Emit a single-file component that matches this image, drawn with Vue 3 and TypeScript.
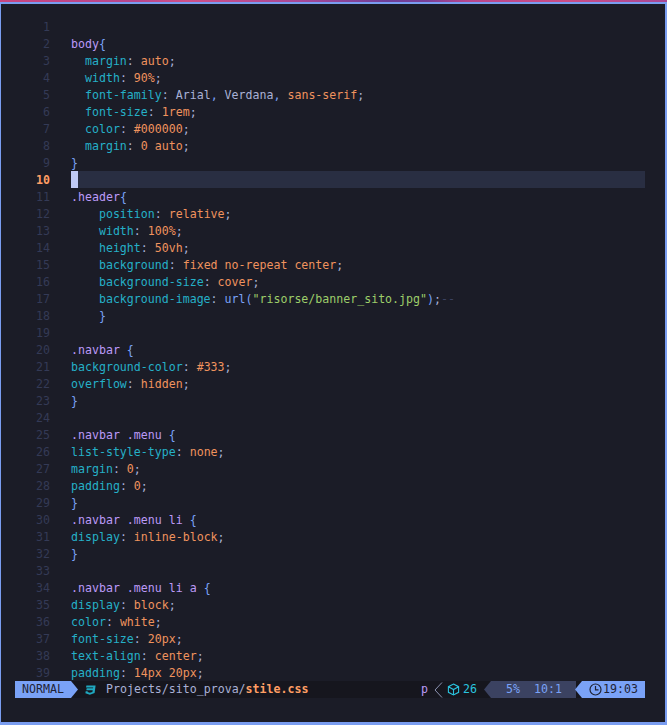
<script setup lang="ts">
type Seg = { t: string; c: string }
const k = 'kw', v = 'val', p = 'pun', f = 'fg', s = 'sel', b = 'blu', g = 'str'
const d = (prop: string, val: string, ind = ''): Seg[] => [
  { t: ind + prop, c: k }, { t: ': ', c: p }, { t: val, c: v }, { t: ';', c: p },
]
const lines: Seg[][] = [
  [],
  [{ t: 'body', c: s }, { t: '{', c: b }],
  d('margin', 'auto', '  '),
  d('width', '90%', '  '),
  [{ t: '  font-family', c: k }, { t: ': ', c: p }, { t: 'Arial', c: f }, { t: ', ', c: b }, { t: 'Verdana', c: f }, { t: ', ', c: b }, { t: 'sans-serif', c: v }, { t: ';', c: p }],
  d('font-size', '1rem', '  '),
  d('color', '#000000', '  '),
  d('margin', '0 auto', '  '),
  [{ t: '}', c: b }],
  [],
  [{ t: '.header', c: s }, { t: '{', c: b }],
  d('position', 'relative', '    '),
  d('width', '100%', '    '),
  d('height', '50vh', '    '),
  d('background', 'fixed no-repeat center', '    '),
  d('background-size', 'cover', '    '),
  [{ t: '    background-image', c: k }, { t: ': ', c: p }, { t: 'url(', c: b }, { t: '"risorse/banner_sito.jpg"', c: g }, { t: ')', c: b }, { t: ';', c: p }, { t: '--', c: 'dim' }],
  [{ t: '    }', c: b }],
  [],
  [{ t: '.navbar ', c: s }, { t: '{', c: b }],
  d('background-color', '#333'),
  d('overflow', 'hidden'),
  [{ t: '}', c: b }],
  [],
  [{ t: '.navbar .menu ', c: s }, { t: '{', c: b }],
  d('list-style-type', 'none'),
  d('margin', '0'),
  d('padding', '0'),
  [{ t: '}', c: b }],
  [{ t: '.navbar .menu li ', c: s }, { t: '{', c: b }],
  d('display', 'inline-block'),
  [{ t: '}', c: b }],
  [],
  [{ t: '.navbar .menu li a ', c: s }, { t: '{', c: b }],
  d('display', 'block'),
  d('color', 'white'),
  d('font-size', '20px'),
  d('text-align', 'center'),
  d('padding', '14px 20px'),
]
</script>

<template>
  <div class="desk">
    <div class="term">
      <div class="editor">
        <div v-for="(line, i) in lines" :key="i" class="row" :class="{ current: i === 9 }">
          <span class="num">{{ i + 1 }}</span>
          <span class="code"><span v-if="i === 9" class="cursor"></span><span v-for="(seg, j) in line" :key="j" :class="seg.c">{{ seg.t }}</span></span>
        </div>
      </div>
      <div class="status">
        <div class="mode">NORMAL</div>
        <svg class="css" width="11" height="10" viewBox="0 0 11 10"><path d="M1.4 0.5H10.6L9.6 8L4.8 9.8L0.4 8.2L.7 6.3H2.8L2.6 7.1L4.8 7.7L7.4 7L7.7 5.2H1.3L1.7 3.2H8L8.2 2.5H1Z" fill="#1fa8c0"/></svg>
        <span class="path">Projects/sito_prova/<b>stile.css</b></span>
        <span class="spacer"></span>
        <span class="plug">p</span>
        <svg class="sep" width="9" height="16" viewBox="0 0 9 16"><path d="M8 .5L1 8L8 15.5" fill="none" stroke="#a9b1d6" stroke-width=".8"/></svg>
        <svg class="cube" width="13" height="13" viewBox="0 0 13 13"><path d="M6.5 1L11.6 3.7V9.3L6.5 12L1.4 9.3V3.7ZM1.4 3.7L6.5 6.5L11.6 3.7M6.5 6.5V12" fill="none" stroke="#2ac3de" stroke-width="1.1"/></svg>
        <span class="count">26</span>
        <div class="pos"><span>5%</span><span>10:1</span></div>
        <div class="clock">
          <svg width="13" height="13" viewBox="0 0 13 13"><circle cx="6.5" cy="6.5" r="5.5" fill="none" stroke="#1f2335" stroke-width="1.2"/><path d="M6.5 3V6.8H9.5" fill="none" stroke="#1f2335" stroke-width="1.2"/></svg>
          <span>19:03</span>
        </div>
      </div>
    </div>
  </div>
</template>

<style>
html, body { margin: 0; background: #1a1b26; }
</style>

<style scoped>
.desk {
  box-sizing: border-box;
  width: 667px;
  height: 725px;
  padding-top: 2px;
  background: linear-gradient(90deg, #c9457f 0%, #b8468c 20%, #d04f86 28%, #a84896 45%, #6f3f98 58%, #7a3f96 64%, #b8468c 70%, #cc4c84 85%, #a84896 100%);
}
.term {
  box-sizing: border-box;
  width: 667px;
  height: 723px;
  overflow: hidden;
  background: #1b1c27;
  border: solid #7a9df0;
  border-width: 2px 2px 3px 1px;
  font-family: "DejaVu Sans Mono", "Liberation Mono", monospace;
  font-size: 11.6px;
  color: #a9b1d6;
}
.editor { box-sizing: border-box; height: 677px; padding-top: 14px; overflow: hidden; }
.row { display: flex; height: 17px; line-height: 19px; white-space: pre; }
.num { width: 49px; flex: none; text-align: right; color: #343a56; margin-right: 21px; }
.current .num { color: #ff9e64; font-weight: 700; }
.code { flex: 1; display: flex; white-space: pre; margin-right: 20px; }
.current .code { background: #292e42; }
.cursor { width: 7px; height: 17px; background: #c0caf5; }
.kw { color: #25b0c8; }
.val { color: #f0935e; }
.pun { color: #a9b1d6; }
.fg { color: #a9b1d6; }
.sel { color: #bb9af7; }
.blu { color: #7aa2f7; }
.str { color: #9ece6a; }
.dim { color: #3b4261; }
.status {
  display: flex;
  align-items: center;
  height: 17px;
  margin: 0 20px 0 14px;
  background: #16161e;
  white-space: pre;
  line-height: 17px;
}
.mode {
  height: 17px;
  width: 63px;
  padding-left: 7px;
  box-sizing: border-box;
  background: #7aa2f7;
  color: #1f2335;
  clip-path: polygon(0 0, 56px 0, 63px 50%, 56px 100%, 0 100%);
}
.css { margin-left: 7px; }
.path { margin-left: 10px; color: #a9b1d6; }
.path b { color: #ff9e64; font-weight: 700; }
.spacer { flex: 1; }
.plug { color: #bb9af7; }
.sep { margin-left: 6px; }
.cube { margin-left: 4px; }
.count { color: #2ac3de; margin-left: 3px; }
.pos {
  display: flex;
  gap: 14px;
  justify-content: center;
  width: 92px;
  margin-left: 7px;
  height: 17px;
  padding-left: 8px;
  box-sizing: border-box;
  background: #3b4261;
  color: #7aa2f7;
  clip-path: polygon(7px 0, 100% 0, 100% 100%, 7px 100%, 0 50%);
}
.clock {
  display: flex;
  align-items: center;
  gap: 1px;
  height: 17px;
  width: 70px;
  margin-left: -1px;
  padding-left: 14px;
  box-sizing: border-box;
  background: #7aa2f7;
  color: #1f2335;
  clip-path: polygon(7px 0, 100% 0, 100% 100%, 7px 100%, 0 50%);
}
</style>
